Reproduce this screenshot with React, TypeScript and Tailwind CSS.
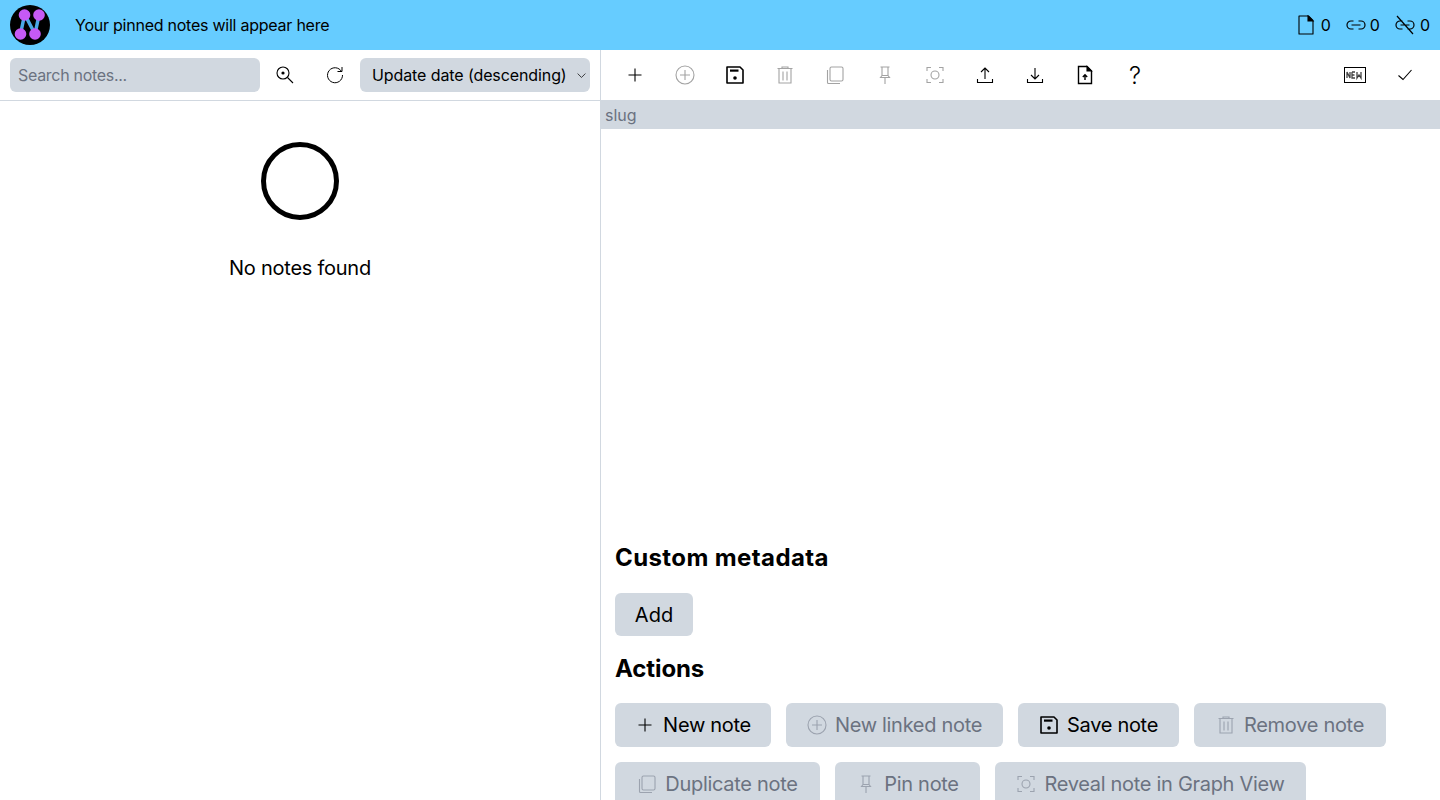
import type { FC, ReactNode } from 'react';

type IconProps = { className?: string };

const FONT = 'font-["Inter","Liberation_Sans",sans-serif]';

const Svg: FC<{ className?: string; children: ReactNode }> = ({ className, children }) => (
    <svg viewBox="0 0 20 20" fill="none" stroke="currentColor" strokeWidth="1.1" className={className}>
        {children}
    </svg>
);

const PlusIcon: FC<IconProps> = ({ className }) => (
    <Svg className={className}>
        <path d="M10 3.5v13M3.5 10h13" />
    </Svg>
);

const LinkedIcon: FC<IconProps> = ({ className }) => (
    <Svg className={className}>
        <circle cx="10" cy="10" r="9" />
        <path d="M10 5v10M5 10h10" />
    </Svg>
);

const SaveIcon: FC<IconProps> = ({ className }) => (
    <Svg className={className}>
        <path d="M2 2h13l3 3v13H2z" strokeWidth="1.6" strokeLinejoin="round" />
        <path d="M5 4.5h8.5v2.2H5z" fill="currentColor" stroke="none" />
        <circle cx="10" cy="13" r="1.8" fill="currentColor" stroke="none" />
    </Svg>
);

const TrashIcon: FC<IconProps> = ({ className }) => (
    <Svg className={className}>
        <path d="M2.5 3.5h15M7 3.5V2h6v1.5M4 3.5h12V18H4zM8 6.5v9M12 6.5v9" />
    </Svg>
);

const CopyIcon: FC<IconProps> = ({ className }) => (
    <Svg className={className}>
        <rect x="5" y="2" width="13" height="14" rx="1.5" />
        <path d="M2.5 5v12.5a1 1 0 0 0 1 1H15" />
    </Svg>
);

const PinIcon: FC<IconProps> = ({ className }) => (
    <Svg className={className}>
        <path d="M5.5 2h9M7 2v8.5M13 2v8.5M5.5 12.5l1.500-2h6l1.500 2zM10 12.5V19" />
    </Svg>
);

const RevealIcon: FC<IconProps> = ({ className }) => (
    <Svg className={className}>
        <path d="M2 6V2.500h4M14 2.500h4V6M18 14v3.500h-4M6 17.500H2V14" />
        <circle cx="10" cy="10" r="4" />
    </Svg>
);

const UploadIcon: FC<IconProps> = ({ className }) => (
    <Svg className={className}>
        <path d="M10 14V3M6 7l4-4 4 4M2.500 14v3.500h15V14" />
    </Svg>
);

const DownloadIcon: FC<IconProps> = ({ className }) => (
    <Svg className={className}>
        <path d="M10 3v11M6 10l4 4 4-4M2.500 14v3.500h15V14" />
    </Svg>
);

const FileUpIcon: FC<IconProps> = ({ className }) => (
    <Svg className={className}>
        <path d="M3.500 1.500H12l4.500 4.500v12.500h-13z" strokeWidth="1.4" />
        <path d="M12 1.500l4.500 4.500H12z" fill="currentColor" />
        <path d="M10 15v-5M7.800 12l2.200-2.200 2.200 2.200" strokeWidth="1.4" />
    </Svg>
);

const NewIcon: FC<IconProps> = ({ className }) => (
    <svg viewBox="0 0 22 16" fill="none" className={className}>
        <rect x="0.5" y="0.5" width="21" height="15" stroke="currentColor" />
        <path d="M3 11V5l3 6V5M8 5v6h3M8 8h2.500M8 5h3M13 5v6l2-3 2 3V5" stroke="currentColor" strokeWidth="1.3" opacity="0.75" />
    </svg>
);

const CheckIcon: FC<IconProps> = ({ className }) => (
    <Svg className={className}>
        <path d="M3.500 10.500l4.500 4 8.500-9.500" />
    </Svg>
);

const SearchIcon: FC<IconProps> = ({ className }) => (
    <Svg className={className}>
        <circle cx="8" cy="8" r="6" />
        <circle cx="8" cy="8" r="1.600" fill="currentColor" stroke="none" />
        <path d="M12.500 12.500l5.500 5.500" />
    </Svg>
);

const RefreshIcon: FC<IconProps> = ({ className }) => (
    <Svg className={className}>
        <path d="M16.500 6.500A7.500 7.500 0 1 0 17.500 10M12.500 6.500h4.500V2" strokeWidth="1" />
    </Svg>
);

const ChevronIcon: FC<IconProps> = ({ className }) => (
    <Svg className={className}>
        <path d="M4 7l6 6 6-6" />
    </Svg>
);

const DocIcon: FC<IconProps> = ({ className }) => (
    <Svg className={className}>
        <path d="M3 1h9.500L17 5.500V19H3z" strokeLinejoin="round" />
        <path d="M12 1l5 5h-5z" fill="currentColor" />
    </Svg>
);

const LinkIcon: FC<IconProps> = ({ className }) => (
    <Svg className={className}>
        <path d="M7.500 6H5a4 4 0 0 0 0 8h2.500M12.500 6H15a4 4 0 0 1 0 8h-2.500M5.500 10h9" strokeWidth="1.2" />
    </Svg>
);

const UnlinkIcon: FC<IconProps> = ({ className }) => (
    <Svg className={className}>
        <path d="M7.500 6H5a4 4 0 0 0 0 8h2.500M12.500 6H15a4 4 0 0 1 0 8h-2.500M5.500 10h9M2 1l16 18" strokeWidth="1.2" />
    </Svg>
);

const Logo: FC = () => (
    <svg viewBox="0 0 40 40" className="h-10 w-10">
        <circle cx="20" cy="20" r="20" fill="#000" />
        <path d="M14.500 10L10.500 29M15 10l10 19M29 10l-4 19" stroke="#4aa8e8" strokeWidth="3.5" fill="none" />
        <circle cx="14.500" cy="10" r="5.800" fill="#c65af5" />
        <circle cx="29" cy="10" r="5.800" fill="#c65af5" />
        <circle cx="10.500" cy="29" r="5.800" fill="#c65af5" />
        <circle cx="25" cy="29" r="5.800" fill="#c65af5" />
    </svg>
);

const toolbarLeft = [
    { Icon: PlusIcon, off: false },
    { Icon: LinkedIcon, off: true },
    { Icon: SaveIcon, off: false },
    { Icon: TrashIcon, off: true },
    { Icon: CopyIcon, off: true },
    { Icon: PinIcon, off: true },
    { Icon: RevealIcon, off: true },
    { Icon: UploadIcon, off: false },
    { Icon: DownloadIcon, off: false },
    { Icon: FileUpIcon, off: false },
];

const ActionButton: FC<{ icon: FC<IconProps>; label: string; off?: boolean; className: string }> = ({
    icon: Icon,
    label,
    off,
    className,
}) => (
    <div className={`flex h-11 items-center justify-center gap-[8px] rounded-md bg-[#d1d8e0] text-[20px] tracking-[-0.3px] ${off ? 'text-[#6b7280]' : 'text-black'} ${className}`}>
        <Icon className={`h-5 w-5 ${off ? 'text-[#9ca3af]' : 'text-black'}`} />
        <span>{label}</span>
    </div>
);

export default function App() {
    return (
        <div className={`flex h-[800px] flex-col overflow-hidden bg-white text-black ${FONT}`}>
            <header className="flex h-[50px] shrink-0 items-center bg-[#66ccff] pl-[10px] pr-[10px]">
                <Logo />
                <span className="ml-[25px] text-base tracking-[-0.24px]">Your pinned notes will appear here</span>
                <div className="ml-auto flex items-center gap-[15px] text-base">
                    <span className="flex items-center gap-[5px]"><DocIcon className="h-5 w-5" />0</span>
                    <span className="flex items-center gap-[4px]"><LinkIcon className="h-5 w-5" />0</span>
                    <span className="flex items-center gap-[5px]"><UnlinkIcon className="h-5 w-5" />0</span>
                </div>
            </header>
            <div className="flex min-h-0 flex-1">
                <aside className="flex w-[601px] shrink-0 flex-col border-r border-[#d1d8e0]">
                    <div className="flex h-[51px] shrink-0 items-center border-b border-[#d1d8e0] px-[10px]">
                        <div className="flex h-[34px] w-[250px] items-center rounded-md bg-[#d1d8e0] px-2 text-base tracking-[-0.3px] text-[#6b7280]">
                            Search notes...
                        </div>
                        <div className="flex w-[50px] justify-center"><SearchIcon className="h-5 w-5" /></div>
                        <div className="flex w-[50px] justify-center"><RefreshIcon className="h-5 w-5" /></div>
                        <div className="flex h-[34px] w-[230px] items-center justify-between rounded-md bg-[#d1d8e0] pl-3 pr-[2px] text-base tracking-[-0.1px]">
                            <span>Update date (descending)</span>
                            <ChevronIcon className="h-[13px] w-[13px]" />
                        </div>
                    </div>
                    <div className="flex flex-col items-center pt-[41px]">
                        <div className="h-[78px] w-[78px] rounded-full border-[5px] border-black" />
                        <p className="mt-[34px] text-xl tracking-[-0.25px]">No notes found</p>
                    </div>
                </aside>
                <main className="flex min-w-0 flex-1 flex-col">
                    <div className="flex h-[50px] shrink-0 items-center justify-between pl-[9px] pr-[10px]">
                        <div className="flex items-center">
                            {toolbarLeft.map(({ Icon, off }, i) => (
                                <div key={i} className="flex h-[50px] w-[50px] items-center justify-center">
                                    <Icon className={`h-5 w-5 ${off ? 'text-[#a3a3a3]' : 'text-black'}`} />
                                </div>
                            ))}
                            <div className="flex h-[50px] w-[50px] items-center justify-center pt-[1px] text-2xl font-light">?</div>
                        </div>
                        <div className="flex items-center">
                            <div className="flex h-[50px] w-[50px] items-center justify-center"><NewIcon className="h-4 w-[22px]" /></div>
                            <div className="flex h-[50px] w-[50px] items-center justify-center"><CheckIcon className="h-5 w-5" /></div>
                        </div>
                    </div>
                    <div className="flex h-[29px] shrink-0 items-center bg-[#d1d8e0] pl-1 text-base text-[#6b7280]">slug</div>
                    <div className="h-[401px] shrink-0" />
                    <div className="px-[14px]">
                        <h2 className="mt-[12px] text-2xl font-bold leading-8 tracking-[0.4px]">Custom metadata</h2>
                        <div className="mt-[19px] flex h-[43px] w-[78px] items-center justify-center rounded-md bg-[#d1d8e0] text-xl">Add</div>
                        <h2 className="mt-[17px] text-2xl font-bold leading-8 tracking-[-0.1px]">Actions</h2>
                        <div className="mt-[18px] flex flex-wrap gap-[15px]">
                            <ActionButton icon={PlusIcon} label="New note" className="w-[156px]" />
                            <ActionButton icon={LinkedIcon} label="New linked note" off className="w-[217px]" />
                            <ActionButton icon={SaveIcon} label="Save note" className="w-[161px]" />
                            <ActionButton icon={TrashIcon} label="Remove note" off className="w-[192px]" />
                            <ActionButton icon={CopyIcon} label="Duplicate note" off className="w-[205px]" />
                            <ActionButton icon={PinIcon} label="Pin note" off className="w-[145px]" />
                            <ActionButton icon={RevealIcon} label="Reveal note in Graph View" off className="w-[311px]" />
                        </div>
                    </div>
                </main>
            </div>
        </div>
    );
}
